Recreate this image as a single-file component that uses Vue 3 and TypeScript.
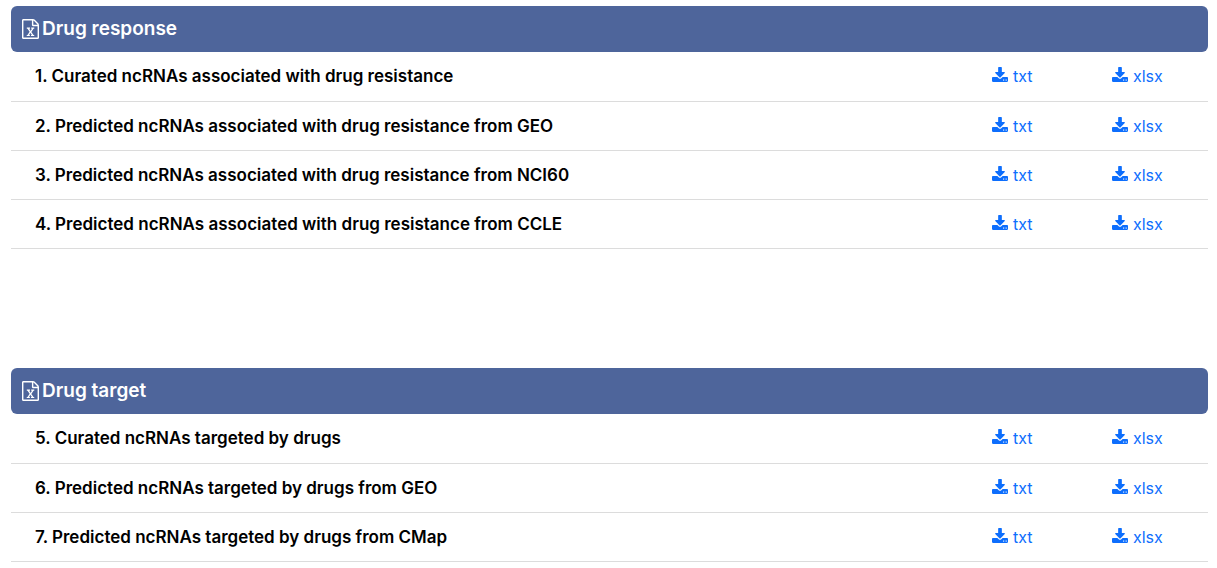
<script setup lang="ts">
interface Dataset {
  id: number
  name: string
}

interface Group {
  title: string
  datasets: Dataset[]
}

const formats: string[] = ['txt', 'xlsx']

const groups: Group[] = [
  {
    title: 'Drug response',
    datasets: [
      { id: 1, name: 'Curated ncRNAs associated with drug resistance' },
      { id: 2, name: 'Predicted ncRNAs associated with drug resistance from GEO' },
      { id: 3, name: 'Predicted ncRNAs associated with drug resistance from NCI60' },
      { id: 4, name: 'Predicted ncRNAs associated with drug resistance from CCLE' },
    ],
  },
  {
    title: 'Drug target',
    datasets: [
      { id: 5, name: 'Curated ncRNAs targeted by drugs' },
      { id: 6, name: 'Predicted ncRNAs targeted by drugs from GEO' },
      { id: 7, name: 'Predicted ncRNAs targeted by drugs from CMap' },
    ],
  },
]
</script>

<template>
  <main class="downloads">
    <section v-for="group in groups" :key="group.title">
      <h2 class="group-title">
        <svg class="file-icon" viewBox="128 0 1536 1792" aria-hidden="true">
          <path
            d="M1596 380q28 28 48 76t20 88v1152q0 40-28 68t-68 28h-1344q-40 0-68-28t-28-68v-1600q0-40 28-68t68-28h896q40 0 88 20t76 48zm-444-244v376h376q-10-29-22-41l-313-313q-12-12-41-22zm384 1528v-1024h-416q-40 0-68-28t-28-68v-416h-768v1536h1280zm-979-234v106h281v-106h-75l103-161q5-7 10-16.500t7.500-13.500 3.500-4h2q1 4 5 10 2 4 4.500 7.500t6 8 6.500 8.500l107 161h-76v106h291v-106h-68l-192-273 195-282h67v-107h-279v107h74l-103 159q-4 7-10 16.500t-9 13.500l-2 3h-2q-1-4-5-10-6-11-17-23l-106-159h76v-107h-290v107h68l189 272-194 283h-68z"
          />
        </svg>
        {{ group.title }}
      </h2>
      <table class="files" :aria-label="group.title">
        <tbody>
          <tr v-for="item in group.datasets" :key="item.id">
            <th scope="row">{{ item.id }}. {{ item.name }}</th>
            <td v-for="format in formats" :key="format">
              <a class="download" :href="`#${item.id}-${format}`">
                <svg class="download-icon" viewBox="64 0 1664 1536" aria-hidden="true">
                  <path
                    d="M1344 1344q0-26-19-45t-45-19-45 19-19 45 19 45 45 19 45-19 19-45zm256 0q0-26-19-45t-45-19-45 19-19 45 19 45 45 19 45-19 19-45zm128-224v320q0 40-28 68t-68 28h-1472q-40 0-68-28t-28-68v-320q0-40 28-68t68-28h465l135 136q58 56 136 56t136-56l136-136h464q40 0 68 28t28 68zm-325-569q17 41-14 70l-448 448q-18 19-45 19t-45-19l-448-448q-31-29-14-70 17-39 59-39h256v-448q0-26 19-45t45-19h256q26 0 45 19t19 45v448h256q42 0 59 39z"
                  />
                </svg>
                {{ format }}
              </a>
            </td>
          </tr>
        </tbody>
      </table>
    </section>
  </main>
</template>

<style>
body {
  margin: 0;
  background: #fff;
}
</style>

<style scoped>
.downloads {
  display: flex;
  flex-direction: column;
  gap: 119px;
  padding: 6px 9px 6px 11px;
  font-family: Inter, "Liberation Sans", sans-serif;
  font-size: 16px;
  line-height: 24px;
  color: #000;
}

.group-title {
  display: flex;
  align-items: center;
  gap: 3px;
  margin: 0;
  padding: 9px 11px;
  border-radius: 6px;
  background: #4e659b;
  color: #fff;
  font-size: 19px;
  font-weight: 600;
  line-height: 28px;
}

.file-icon {
  width: 17px;
  height: 20px;
  margin-bottom: 1px;
  fill: currentColor;
}

.files {
  width: 100%;
  border-collapse: separate;
  border-spacing: 0;
  table-layout: fixed;
}

.files th,
.files td {
  padding: 12px 0;
  border-bottom: 1px solid #dcdcdc;
  text-align: left;
}

.files tr:first-child > * {
  padding-bottom: 13px;
}

.files th {
  padding-left: 24px;
  font-size: 17px;
  font-weight: 600;
}

.files td {
  width: 120px;
}

.files td:last-child {
  width: 96px;
}

.download {
  display: flex;
  align-items: center;
  gap: 5px;
  color: #0d6efd;
  text-decoration: none;
}

.download-icon {
  width: 16px;
  height: 15px;
  margin-bottom: 3px;
  fill: currentColor;
}
</style>
